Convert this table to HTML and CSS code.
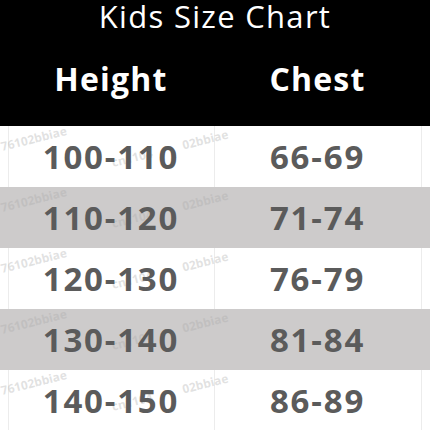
FILE: index.html
```html
<!DOCTYPE html>
<html>
<head>
<meta charset="utf-8">
<link rel="stylesheet" href="styles.css">
</head>
<body>
<div class="chart">
  <div class="head">
    <div class="title">Kids Size Chart</div>
    <div class="cols">
      <div class="col">Height</div>
      <div class="col">Chest</div>
    </div>
  </div>
  <div class="rows">
    <div class="row"><span class="wm wm1">76102bbiae</span><span class="wm wm2">cn1104 02bbiae</span><div class="cell">100-110</div><div class="cell">66-69</div></div>
    <div class="row alt"><span class="wm wm1">76102bbiae</span><span class="wm wm2">cn1104 02bbiae</span><div class="cell">110-120</div><div class="cell">71-74</div></div>
    <div class="row"><span class="wm wm1">76102bbiae</span><span class="wm wm2">cn1104 02bbiae</span><div class="cell">120-130</div><div class="cell">76-79</div></div>
    <div class="row alt"><span class="wm wm1">76102bbiae</span><span class="wm wm2">cn1104 02bbiae</span><div class="cell">130-140</div><div class="cell">81-84</div></div>
    <div class="row"><span class="wm wm1">76102bbiae</span><span class="wm wm2">cn1104 02bbiae</span><div class="cell">140-150</div><div class="cell">86-89</div></div>
  </div>
</div>
</body>
</html>
```
FILE: styles.css
```css
html, body {
  margin: 0;
  padding: 0;
  background: #ffffff;
}
.chart {
  width: 430px;
  height: 430px;
  overflow: hidden;
  font-family: "Open Sans", "Noto Sans", sans-serif;
}
.head {
  background: #000000;
  color: #ffffff;
  height: 126px;
  display: flex;
  flex-direction: column;
}
.title {
  text-align: center;
  font-size: 31px;
  font-weight: 400;
  line-height: 32px;
  letter-spacing: 1.3px;
}
.cols {
  display: grid;
  grid-template-columns: 206px 207px;
  margin-left: 8px;
  margin-top: 27px;
}
.col {
  text-align: center;
  font-size: 32px;
  font-weight: 700;
  line-height: 40px;
  letter-spacing: 1.2px;
}
.rows {
  display: flex;
  flex-direction: column;
}
.row {
  position: relative;
  height: 61px;
  display: grid;
  grid-template-columns: 206px 207px 1fr;
  padding-left: 8px;
  background: linear-gradient(#ececec, #ececec) 8px 0 / 1px 100% no-repeat,
              linear-gradient(#ececec, #ececec) 214px 0 / 1px 100% no-repeat,
              linear-gradient(#ececec, #ececec) 421px 0 / 1px 100% no-repeat,
              #ffffff;
}
.row.alt {
  background: #cdcbcb;
}
.cell {
  position: relative;
  z-index: 1;
  text-align: center;
  font-size: 33px;
  font-weight: 700;
  color: #5b5b5b;
  line-height: 61px;
  letter-spacing: 1.8px;
}
.wm {
  position: absolute;
  font-family: "Open Sans", sans-serif;
  font-size: 12px;
  font-weight: 700;
  color: rgba(170, 170, 170, 0.35);
  transform: rotate(-14deg);
  transform-origin: left bottom;
  white-space: nowrap;
  z-index: 0;
}
.wm1 { left: 3px; top: 12px; }
.wm2 { left: 114px; top: 28px; word-spacing: 28px; }
```
